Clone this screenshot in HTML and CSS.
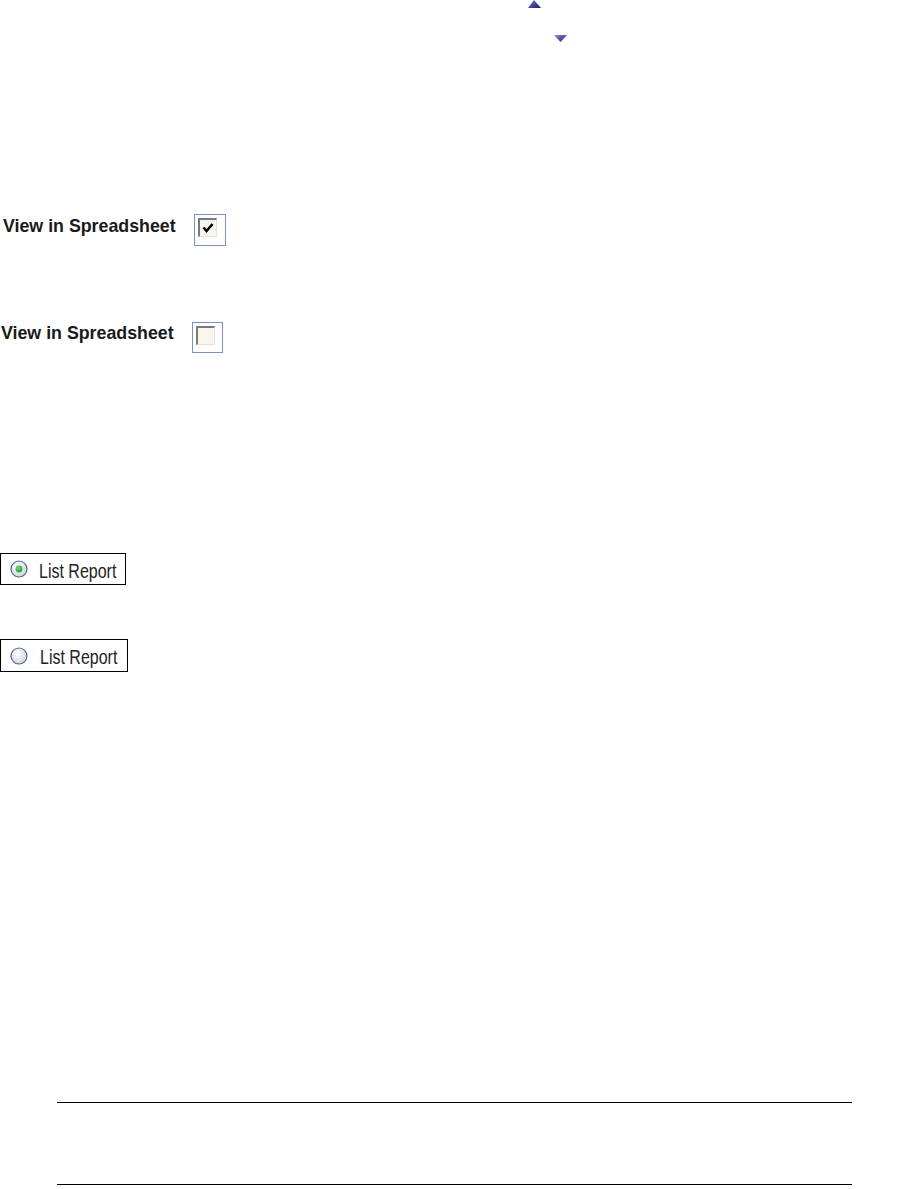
FILE: index.html
```html
<!DOCTYPE html>
<html>
<head>
<meta charset="utf-8">
<link rel="stylesheet" href="styles.css">
</head>
<body>
<div class="page">
  <div class="arrows">
    <svg class="arrow-up" width="14" height="8" viewBox="0 0 14 8">
      <defs>
        <linearGradient id="gu" x1="0" y1="0" x2="1" y2="1">
          <stop offset="0" stop-color="#7c82bc"/>
          <stop offset="1" stop-color="#14147a"/>
        </linearGradient>
      </defs>
      <polygon points="6,0 13,8 0,8" fill="url(#gu)"/>
    </svg>
    <svg class="arrow-down" width="14" height="8" viewBox="0 0 14 8">
      <defs>
        <linearGradient id="gd" x1="0" y1="0" x2="1" y2="1">
          <stop offset="0" stop-color="#8a90c8"/>
          <stop offset="1" stop-color="#1a1a82"/>
        </linearGradient>
      </defs>
      <polygon points="0,0 13,0 6.5,7" fill="url(#gd)"/>
    </svg>
  </div>

  <div class="cb-row cb-row-1">
    <span class="cb-label">View in Spreadsheet</span>
    <span class="cb-frame cb-frame-1">
      <span class="cb-box">
        <svg width="12" height="12" viewBox="0 0 12 12"><path d="M1.5 5.5 L4.5 9 L10.5 2" fill="none" stroke="#000" stroke-width="2.6"/></svg>
      </span>
    </span>
  </div>

  <div class="cb-row cb-row-2">
    <span class="cb-label">View in Spreadsheet</span>
    <span class="cb-frame cb-frame-2">
      <span class="cb-box"></span>
    </span>
  </div>

  <div class="radio radio-1">
    <svg class="radio-icon" width="18" height="18" viewBox="0 0 18 18">
      <defs>
        <radialGradient id="rf1" cx="0.4" cy="0.35" r="0.7">
          <stop offset="0" stop-color="#ffffff"/>
          <stop offset="1" stop-color="#cdd2d9"/>
        </radialGradient>
        <radialGradient id="dot" cx="0.4" cy="0.35" r="0.7">
          <stop offset="0" stop-color="#6fe06f"/>
          <stop offset="1" stop-color="#1d9a2a"/>
        </radialGradient>
      </defs>
      <circle cx="9" cy="9" r="8" fill="url(#rf1)" stroke="#4f6a8e" stroke-width="1.2"/>
      <circle cx="9" cy="9" r="3.4" fill="url(#dot)"/>
    </svg>
    <span class="radio-text">List Report</span>
  </div>

  <div class="radio radio-2">
    <svg class="radio-icon" width="18" height="18" viewBox="0 0 18 18">
      <defs>
        <radialGradient id="rf2" cx="0.4" cy="0.35" r="0.7">
          <stop offset="0" stop-color="#ffffff"/>
          <stop offset="1" stop-color="#cdd2d9"/>
        </radialGradient>
      </defs>
      <circle cx="9" cy="9" r="8" fill="url(#rf2)" stroke="#4f6a8e" stroke-width="1.2"/>
    </svg>
    <span class="radio-text">List Report</span>
  </div>

  <div class="rule rule-1"></div>
  <div class="rule rule-2"></div>
</div>
</body>
</html>
```

FILE: styles.css
```css
html, body {
  margin: 0;
  padding: 0;
  background: #ffffff;
}

.page {
  display: flex;
  flex-direction: column;
  align-items: flex-start;
  width: 908px;
  font-family: "Liberation Sans", Arial, sans-serif;
}

.arrows {
  display: flex;
  flex-direction: column;
}

.arrow-up {
  display: block;
  margin-left: 528px;
}

.arrow-down {
  display: block;
  margin-left: 554px;
  margin-top: 27px;
}

.cb-row {
  display: flex;
  align-items: flex-start;
}

.cb-row-1 {
  margin-top: 171px;
}

.cb-row-2 {
  margin-top: 76px;
}

.cb-label {
  font-weight: bold;
  font-size: 17.8px;
  line-height: 20px;
  color: #1a1a1a;
  margin-top: 2px;
  padding-left: 3px;
  white-space: nowrap;
}

.cb-row-1 .cb-label {
  width: 191px;
}

.cb-row-2 .cb-label {
  width: 191px;
  margin-top: 1px;
  padding-left: 1px;
}

.cb-frame {
  display: flex;
  box-sizing: border-box;
  border: 1px solid #7b8fc2;
  background: #ffffff;
  padding: 3px 0 0 3px;
}

.cb-frame-1 {
  width: 32px;
  height: 32px;
}

.cb-frame-2 {
  width: 31px;
  height: 31px;
}

.cb-box {
  display: flex;
  align-items: center;
  justify-content: center;
  box-sizing: border-box;
  width: 19px;
  height: 19px;
  border-top: 2px solid #7a7a7a;
  border-left: 2px solid #7a7a7a;
  border-right: 1px solid #e4e1d6;
  border-bottom: 1px solid #e4e1d6;
  background: #f6f5ee;
}

.radio {
  display: flex;
  align-items: center;
  box-sizing: border-box;
  border: 1px solid #000000;
  background: #ffffff;
}

.radio-1 {
  margin-top: 200px;
  width: 126px;
  height: 32px;
}

.radio-2 {
  margin-top: 54px;
  width: 128px;
  height: 33px;
}

.radio-icon {
  display: block;
  flex: none;
  margin-left: 9px;
}

.radio-text {
  display: inline-block;
  white-space: nowrap;
  font-size: 20px;
  line-height: 22px;
  color: #222222;
  margin-left: 11px;
  margin-top: 4px;
  transform: scaleX(0.8);
  transform-origin: 0 50%;
}

.radio-2 .radio-text {
  margin-left: 12px;
  margin-top: 3px;
}

.rule {
  width: 795px;
  height: 0;
  border-top: 1px solid #000000;
  margin-left: 57px;
}

.rule-1 {
  margin-top: 430px;
}

.rule-2 {
  margin-top: 81px;
}
```
